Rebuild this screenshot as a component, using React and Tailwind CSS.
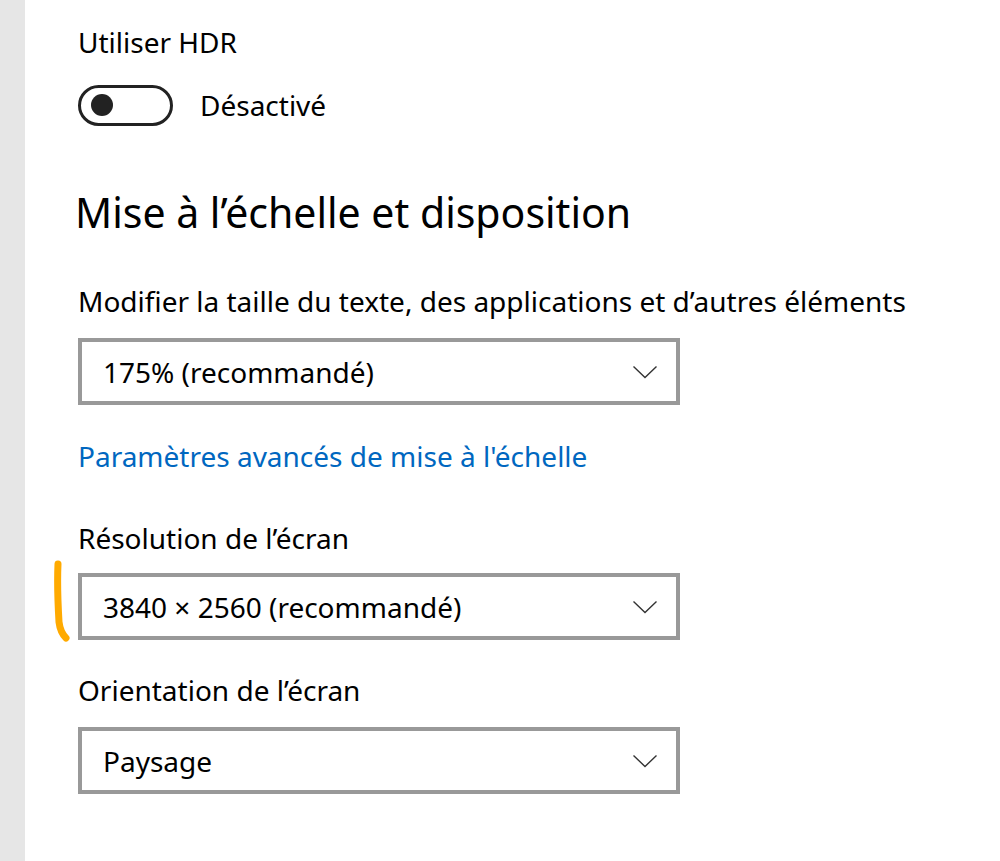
import React from 'react';

function Chevron() {
  return (
    <svg width="26" height="14" viewBox="0 0 26 14" fill="none" className="shrink-0">
      <path d="M1.5 1.5 L13 12.5 L24.5 1.5" stroke="#333" strokeWidth="1.4" />
    </svg>
  );
}

function Select({ value }) {
  return (
    <div className="flex h-[67px] w-[602px] items-center justify-between border-4 border-[#999999] bg-white pl-[21px] pr-[18px]">
      <span className="text-[28px] text-black">{value}</span>
      <Chevron />
    </div>
  );
}

export default function App() {
  return (
    <div
      className="flex min-h-[861px] w-[1000px] bg-white text-black"
      style={{ fontFamily: '"Noto Sans", "Open Sans", sans-serif' }}
    >
      <div className="w-[25px] shrink-0 bg-[#e6e6e6]" />

      <div className="flex flex-col pl-[53px] pt-[22px]">
        <div className="text-[28px] leading-[40px]">Utiliser HDR</div>
        <div className="mt-[22px] flex items-center">
          <div className="flex h-[41px] w-[95px] items-center rounded-full border-[3px] border-[#222] pl-[10px]">
            <div className="h-[22px] w-[22px] rounded-full bg-[#222]" />
          </div>
          <span className="ml-[27px] text-[28px]">Désactivé</span>
        </div>

        <h2 className="-ml-[3px] mt-[60px] text-[41px] leading-[52px] font-normal">
          Mise à l’échelle et disposition
        </h2>

        <div className="mt-[45px] text-[28px] leading-[36px]">
          Modifier la taille du texte, des applications et d’autres éléments
        </div>
        <div className="mt-[19px]">
          <Select value="175% (recommandé)" />
        </div>

        <a className="mt-[33px] text-[28px] leading-[36px] text-[#0067c0]">
          Paramètres avancés de mise à l'échelle
        </a>

        <div className="mt-[46px] text-[28px] leading-[36px]">Résolution de l’écran</div>
        <div className="relative mt-[17px]">
          <svg width="20" height="82" viewBox="0 0 20 82" className="absolute -left-[24px] -top-[13px]">
            <path d="M4 4 C3 25 4 45 5 62 C6 70 8 74 12 78" stroke="#ffaa00" strokeWidth="7" strokeLinecap="round" fill="none" />
          </svg>
          <Select value="3840 × 2560 (recommandé)" />
        </div>

        <div className="mt-[32px] text-[28px] leading-[36px]">Orientation de l’écran</div>
        <div className="mt-[19px]">
          <Select value="Paysage" />
        </div>
      </div>
    </div>
  );
}
